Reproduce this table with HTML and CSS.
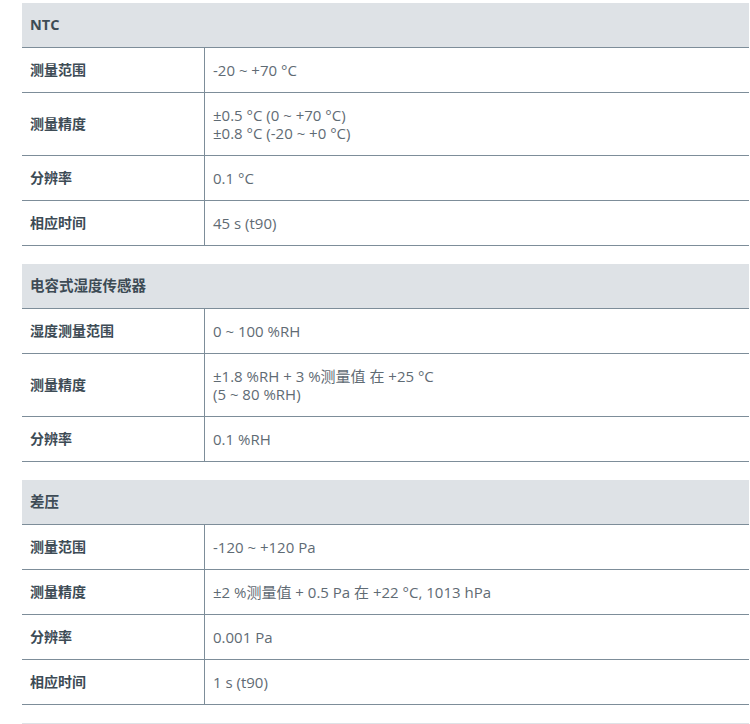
FILE: index.html
```html
<!DOCTYPE html>
<html lang="zh">
<head>
<meta charset="utf-8">
<link rel="stylesheet" href="styles.css">
</head>
<body>
<div class="page">
  <table class="spec">
    <thead><tr><th colspan="2">NTC</th></tr></thead>
    <tbody>
      <tr><td class="k">测量范围</td><td class="v">-20 ~ +70 °C</td></tr>
      <tr><td class="k">测量精度</td><td class="v">±0.5 °C (0 ~ +70 °C)<br>±0.8 °C (-20 ~ +0 °C)</td></tr>
      <tr><td class="k">分辨率</td><td class="v">0.1 °C</td></tr>
      <tr><td class="k">相应时间</td><td class="v">45 s (t90)</td></tr>
    </tbody>
  </table>
  <table class="spec">
    <thead><tr><th colspan="2">电容式湿度传感器</th></tr></thead>
    <tbody>
      <tr><td class="k">湿度测量范围</td><td class="v">0 ~ 100 %RH</td></tr>
      <tr><td class="k">测量精度</td><td class="v">±1.8 %RH + 3 %测量值 在 +25 °C<br>(5 ~ 80 %RH)</td></tr>
      <tr><td class="k">分辨率</td><td class="v">0.1 %RH</td></tr>
    </tbody>
  </table>
  <table class="spec">
    <thead><tr><th colspan="2">差压</th></tr></thead>
    <tbody>
      <tr><td class="k">测量范围</td><td class="v">-120 ~ +120 Pa</td></tr>
      <tr><td class="k">测量精度</td><td class="v">±2 %测量值 + 0.5 Pa 在 +22 °C, 1013 hPa</td></tr>
      <tr><td class="k">分辨率</td><td class="v">0.001 Pa</td></tr>
      <tr><td class="k">相应时间</td><td class="v">1 s (t90)</td></tr>
    </tbody>
  </table>
  <table class="spec">
    <thead><tr><th colspan="2">&nbsp;</th></tr></thead>
  </table>
</div>
</body>
</html>
```

FILE: styles.css
```css
html, body {
  margin: 0;
  padding: 0;
  background: #fff;
  overflow: hidden;
}
.page {
  padding: 3px 1px 0 22px;
  display: flex;
  flex-direction: column;
  gap: 18px;
}
.spec {
  width: 727px;
  border-collapse: collapse;
  font-family: "Open Sans", "Noto Sans CJK SC", sans-serif;
  font-size: 15px;
  line-height: 18px;
}
.spec th {
  background: #dee2e6;
  color: #3d4b55;
  text-align: left;
  font-weight: 700;
  font-size: 14.5px;
  padding: 13px 8px;
  border-bottom: 1px solid #7d8d99;
}
.spec td {
  padding: 13px 8px;
  border-bottom: 1px solid #7d8d99;
  vertical-align: middle;
}
.spec td.k {
  width: 166px;
  font-weight: 700;
  font-size: 14px;
  color: #3d4b55;
  border-right: 1px solid #7d8d99;
}
.spec td.v {
  color: #5f6b74;
  padding-left: 8px;
}
```
